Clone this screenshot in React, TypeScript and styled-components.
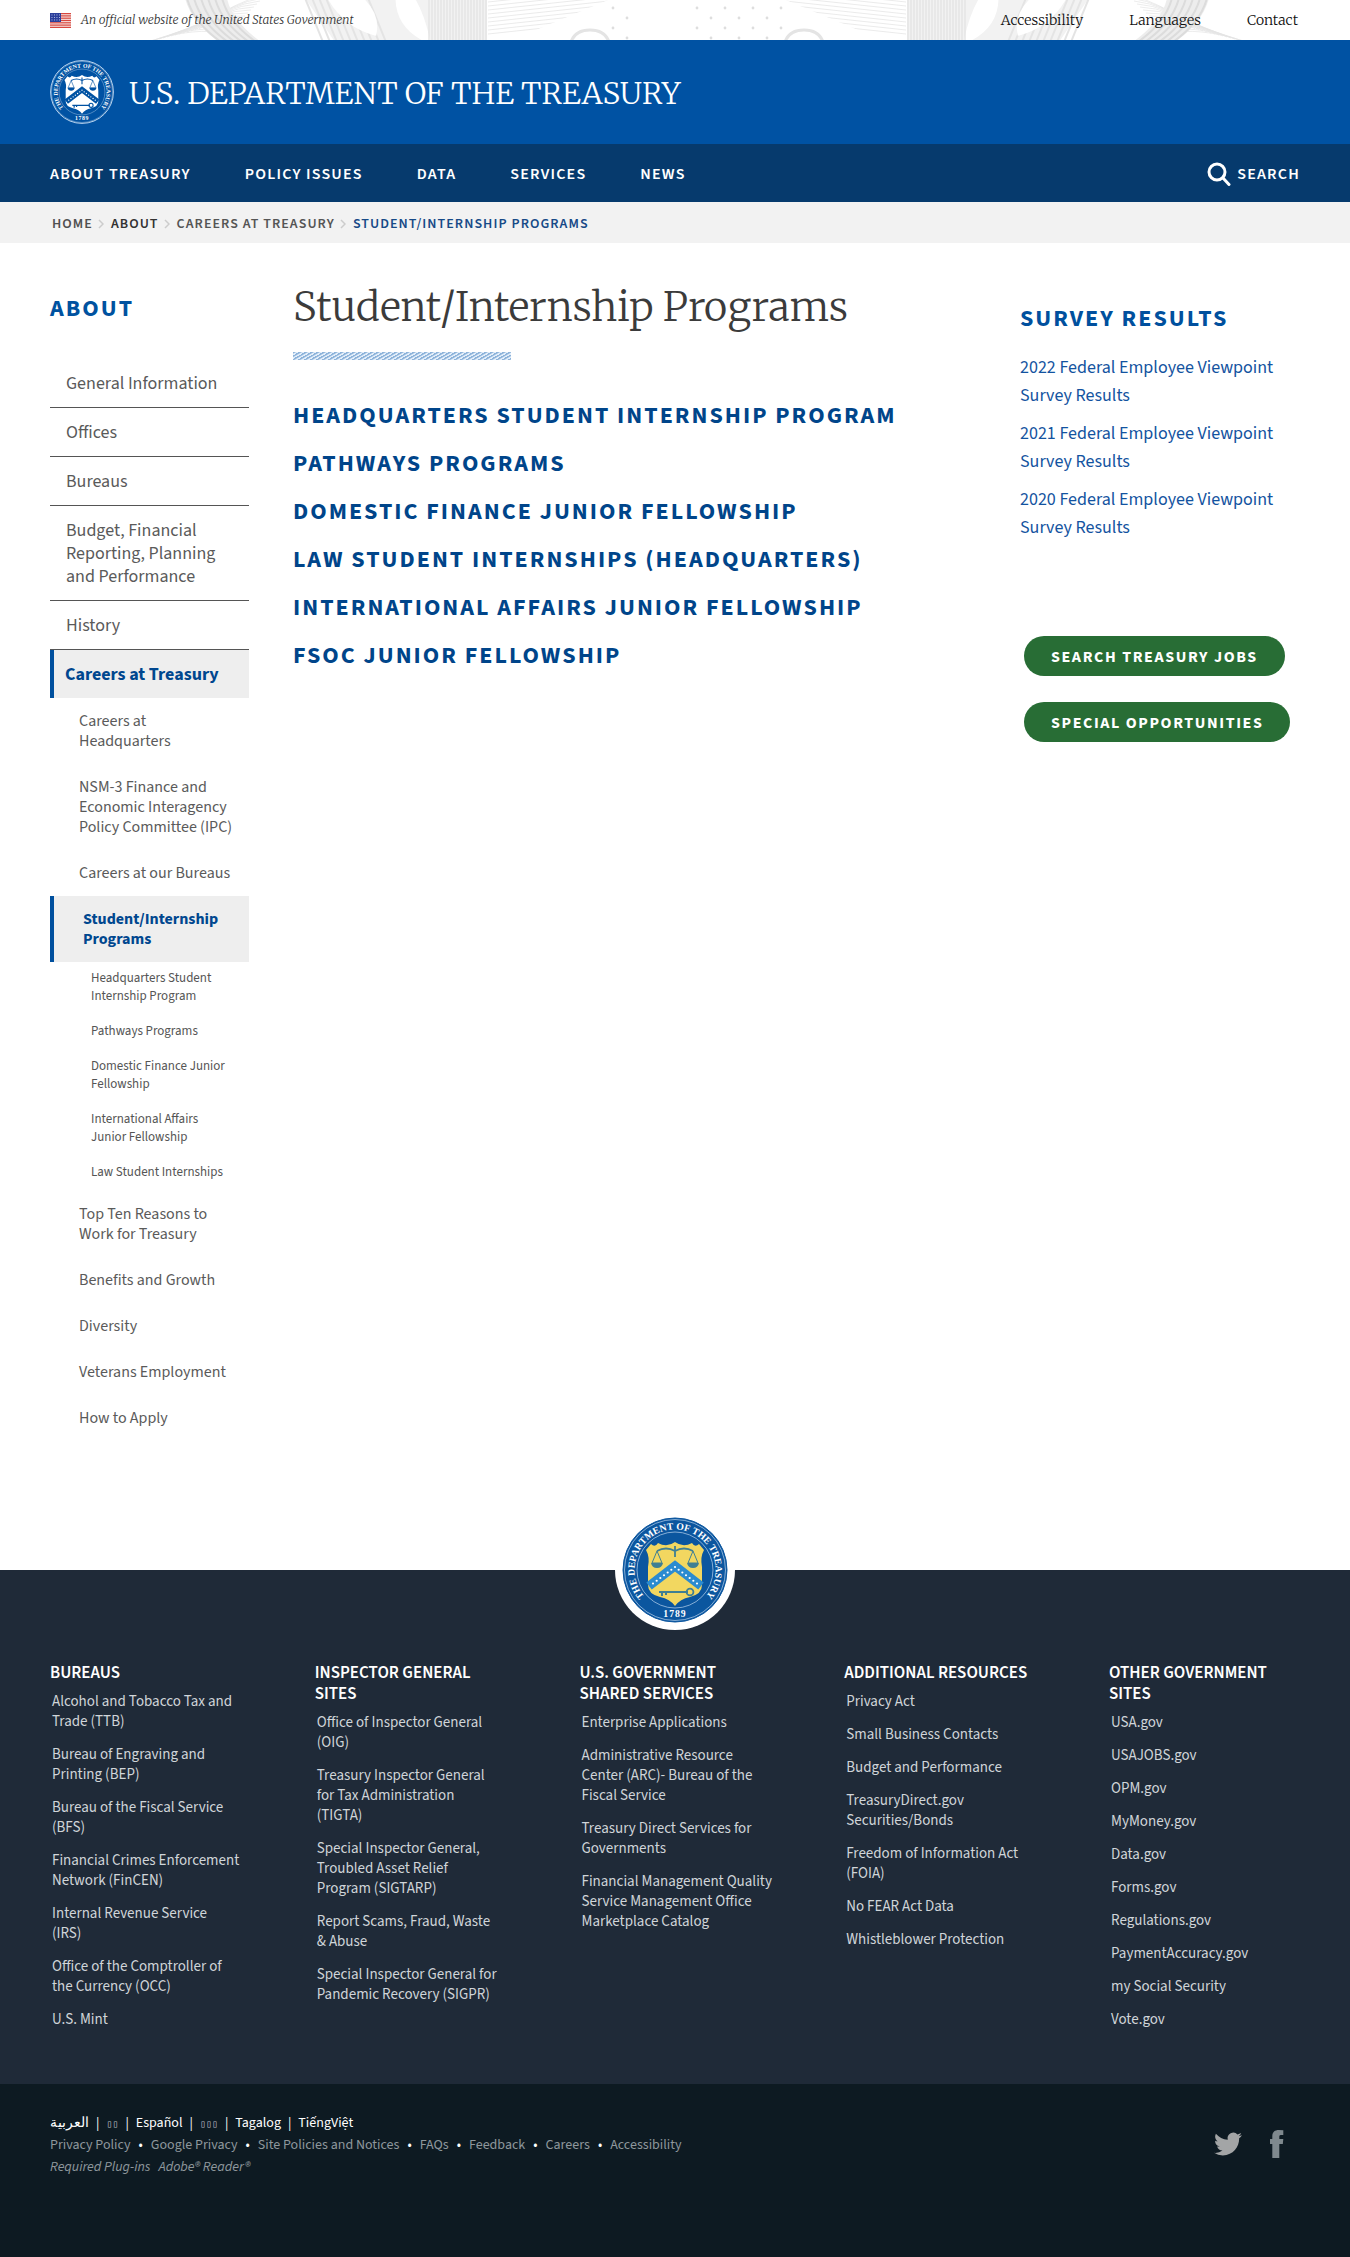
import React from "react";
import styled, { createGlobalStyle, css } from "styled-components";

const sans = `"Source Sans 3", "Noto Sans CJK SC", "Noto Sans", sans-serif`;
const serif = `Merriweather, "Liberation Serif", serif`;

const GlobalStyle = createGlobalStyle`
  *, *::before, *::after { box-sizing: border-box; }
  body { margin: 0; background: #fff; color: #444; font-family: ${sans}; font-size: 16px; }
  a { color: inherit; text-decoration: none; }
  a:hover { text-decoration: underline; }
  ul, ol { list-style: none; margin: 0; padding: 0; }
  h1, h2, h3, p { margin: 0; }
`;

const row = css`
  display: flex;
  align-items: center;
`;

const TopStrip = styled.div`
  ${row}
  position: relative;
  justify-content: space-between;
  height: 40px;
  padding: 0 52px 0 50px;
  overflow: hidden;
`;
const Engraving = styled.svg`
  position: absolute;
  top: 0;
  left: 50%;
  margin-left: -675px;
  width: 1350px;
  height: 40px;
`;
const Official = styled.p`
  ${row}
  position: relative;
  gap: 10px;
  font: italic 300 12px/20px ${serif};
  color: #333;
`;
const UtilityNav = styled.nav`
  ${row}
  position: relative;
  gap: 46px;
  font: 300 14px/20px ${serif};
  color: #111;
`;

const Masthead = styled.header`
  ${row}
  gap: 15px;
  height: 104px;
  padding: 0 50px;
  background: #0052a3;
`;
const SiteName = styled.a`
  padding-top: 2px;
  font: 300 30px/40px ${serif};
  color: #fff;
`;

const MainNav = styled.nav`
  ${row}
  justify-content: space-between;
  height: 58px;
  padding: 2px 50px 0;
  background: #063a6d;
  color: #fff;
  font: 600 16px/20px ${sans};
  letter-spacing: 0.075em;
`;
const NavList = styled.ul`
  ${row}
  gap: 54px;
`;
const SearchButton = styled.button`
  ${row}
  gap: 6px;
  padding: 0;
  border: 0;
  background: none;
  color: inherit;
  font: inherit;
  letter-spacing: inherit;
  cursor: pointer;
`;

const Crumbs = styled.ol`
  ${row}
  height: 41px;
  padding: 2px 52px 0;
  background: #f2f2f2;
  font: 600 14px/20px ${sans};
  letter-spacing: 0.075em;
`;
const Crumb = styled.li<{ $tone: string }>`
  ${row}
  color: ${(p) => p.$tone};
  svg { margin: 0 7px 0 5px; }
`;

const Body = styled.div`
  display: grid;
  grid-template-columns: 199px minmax(0, 1fr) 280px;
  column-gap: 44px;
  padding: 0 50px 129px;
`;

const SideTitle = styled.h2`
  padding-top: 52px;
  margin-bottom: 36px;
  font: 700 24px/28px ${sans};
  letter-spacing: 2px;
  color: #0052a0;
`;
const SideItem = styled.li<{ $active?: boolean }>`
  a {
    display: block;
    padding: 13px 12px 12px 16px;
    font-size: 18px;
    line-height: 23px;
    color: #5a5a5a;
    border-bottom: 1px solid #555;
  }
  ${(p) =>
    p.$active &&
    css`
      > a {
        padding-left: 11px;
        border-left: 4px solid #00509e;
        border-bottom: 0;
        background: #eee;
        color: #00478f;
        font-weight: 700;
      }
    `}
`;
const SubItem = styled.li<{ $active?: boolean }>`
  > a {
    display: block;
    padding: 13px 12px 13px 29px;
    font-size: 16px;
    line-height: 20px;
    border: 0;
    color: #5a5a5a;
  }
  ${(p) =>
    p.$active &&
    css`
      > a {
        border-left: 4px solid #00509e;
        background: #eee;
        color: #00478f;
        font-weight: 700;
      }
    `}
`;
const LeafItem = styled.li`
  > a {
    display: block;
    padding: 7px 20px 10px 41px;
    font-size: 13px;
    line-height: 18px;
    border: 0;
    color: #555;
  }
`;

const PageTitle = styled.h1`
  padding-top: 36px;
  font: 300 40px/56px ${serif};
  color: #3b3b3b;
`;
const Hatch = styled.div`
  width: 218px;
  height: 8px;
  margin: 17px 0 42px;
  background: repeating-linear-gradient(150deg, #8db3da 0 1px, #e3eefa 2px 3px);
`;
const ProgramList = styled.ul`
  display: grid;
  gap: 20px;
  font: 700 24px/28px ${sans};
  letter-spacing: 2px;
  color: #00458a;
`;

const AsideTitle = styled.h2`
  padding-top: 62px;
  margin-bottom: 21px;
  font: 700 24px/28px ${sans};
  letter-spacing: 2px;
  color: #00509e;
`;
const SurveyList = styled.ul`
  display: grid;
  gap: 10px;
  margin-bottom: 94px;
  font-size: 18px;
  line-height: 28px;
  color: #1353a0;
`;
const Actions = styled.div`
  display: grid;
  justify-items: start;
  gap: 26px;
  padding-left: 4px;
`;
const Pill = styled.button`
  height: 40px;
  padding: 1px 27px 0;
  border: 0;
  border-radius: 20px;
  background: #286d35;
  color: #fff;
  font: 700 16px/20px ${sans};
  letter-spacing: 0.1em;
  cursor: pointer;
`;

const FooterTop = styled.footer`
  position: relative;
  padding: 93px 50px 54px;
  background: #1f2a38;
`;
const SealBadge = styled.div`
  position: absolute;
  top: -60px;
  left: 50%;
  margin-left: -60px;
  display: grid;
  place-items: center;
  width: 120px;
  height: 120px;
  border-radius: 50%;
  background: #fff;
`;
const FooterGrid = styled.div`
  display: grid;
  grid-template-columns: repeat(5, 191px);
  justify-content: space-between;
`;
const FooterHeading = styled.h3`
  margin-bottom: 8px;
  font: 600 17px/21px ${sans};
  color: #fff;
`;
const FooterLinks = styled.ul`
  display: grid;
  gap: 13px;
  padding-left: 2px;
  font-size: 15px;
  line-height: 20px;
  white-space: pre;
  color: #d0d5d9;
`;

const FooterBottom = styled.div`
  display: flex;
  justify-content: space-between;
  padding: 28px 66px 79px 50px;
  background: #0d1a22;
  font-size: 14px;
  line-height: 22px;
  color: #8e979c;
`;
const InlineList = styled.ul<{ $mark: string; $gap: number }>`
  display: flex;
  height: 22px;
  li + li::before {
    content: "${(p) => p.$mark}";
    margin: 0 ${(p) => p.$gap}px;
    color: #fff;
  }
`;
const Languages = styled(InlineList)`
  color: #fff;
`;
const Boxes = styled.a`
  font-family: "DejaVu Sans Mono", monospace;
  font-size: 10px;
  color: #b9bfc3;
`;
const Plugins = styled.p`
  display: flex;
  gap: 8px;
  font-style: italic;
`;
const Social = styled.div`
  display: flex;
  align-items: flex-start;
  gap: 28px;
  padding-top: 18px;
`;

const shield =
  "M29 27Q33 31 36 26Q45 31 53 25Q61 31 70 26Q73 31 77 27L82 33Q78 40 80 50V68Q80 77 68 80Q58 82 53 89Q48 82 38 80Q26 77 26 68V50Q28 40 24 33Z";

function Seal({ size, mono, id }: { size: number; mono?: boolean; id: string }) {
  const blue = mono ? "#0052a3" : "#0b569f";
  const gold = mono ? "#fff" : "#f2d760";
  const ink = mono ? "#0052a3" : "#3f7f93";
  const band = mono ? "#0052a3" : "#2b8bd0";
  const stars = [0, 1, 2, 3, 4, 5, 6, 7, 8, 9, 10, 11, 12];
  return (
    <svg width={size} height={size} viewBox="0 0 106 106" role="img" aria-label="Treasury seal">
      <circle cx="53" cy="53" r="52" fill={blue} stroke={mono ? "#cfe3f7" : "#0b569f"} strokeWidth={mono ? 1.5 : 1} />
      <circle cx="53" cy="53" r="50.5" fill="none" stroke="#b9d3ec" strokeWidth="0.7" />
      <circle cx="53" cy="53" r="38" fill="none" stroke="#b9d3ec" strokeWidth="0.7" />
      <path id={id} d="M53 93.500A40.500 40.500 0 1 1 53.1 93.500" fill="none" />
      <text fontFamily="Liberation Serif, serif" fontSize="9.700" fontWeight="700" fill="#fff" textAnchor="middle">
        <textPath href={`#${id}`} startOffset="50%">THE DEPARTMENT OF THE TREASURY</textPath>
      </text>
      <text x="53" y="100" fontFamily="Liberation Serif, serif" fontSize="9.700" fontWeight="700" fill="#fff" textAnchor="middle" letterSpacing="1">1789</text>
      <path d={shield} fill={gold} />
      <path d="M27 69L53 49L79 69" fill="none" stroke={band} strokeWidth="9" />
      {stars.map((i) => {
        const t = (i - 6) / 6;
        return <circle key={i} cx={53 + t * 22} cy={50 + Math.abs(t) * 16.5} r="1.1" fill="#fff" />;
      })}
      <g fill="none" stroke={ink} strokeWidth="1.8">
        <path d="M35 34Q44 29 53 34Q62 29 71 34M53 29V40" />
        <path d="M35 34L30 46H40ZM71 34L66 46H76Z" strokeWidth="1" />
        <path d="M37 75H66M40 75V79M44 75V78" strokeWidth="2" />
        <circle cx="68" cy="75" r="3.4" />
      </g>
      <path d="M29 46H41Q40 51 35 51Q30 51 29 46ZM65 46H77Q76 51 71 51Q66 51 65 46Z" fill={ink} />
    </svg>
  );
}

function Flag() {
  return (
    <svg width="21" height="15" viewBox="0 0 21 15" aria-hidden="true">
      <rect width="21" height="15" fill="#f6e3e0" />
      {[0, 1, 2, 3, 4, 5, 6].map((i) => (
        <rect key={i} y={i * 2.3} width="21" height="1.2" fill="#d8473f" />
      ))}
      <rect width="11" height="9" fill="#2b3f9b" />
      {[1.5, 4, 6.5, 9].map((x) =>
        [1.5, 4, 6.5].map((y) => <rect key={`${x}-${y}`} x={x} y={y} width="0.9" height="0.9" fill="#cfd6f2" />)
      )}
    </svg>
  );
}

function range(n: number) {
  return Array.from({ length: n }, (_, i) => i);
}

function EngravingHalf() {
  return (
    <g fill="none" stroke="#e4e4e4" strokeWidth="1">
      {range(14).map((i) => (
        <path key={`a${i}`} d={`M${-550 + i * 4} ${42 - i}Q${-500 + i * 3} ${26 - i * 2} ${-470 + i * 3} ${34 - i * 3}`} opacity="0.7" />
      ))}
      <path d="M-512 -2Q-506 22 -478 42H-436Q-466 20 -470 -2Z" fill="#ededed" stroke="none" />
      {range(6).map((i) => (
        <path key={`b${i}`} d={`M${-510 + i * 7} -2Q${-504 + i * 7} 22 ${-476 + i * 7} 42`} stroke="#dcdcdc" strokeWidth="2" />
      ))}
      <path d="M-392 -2L-362 42H-210V-2Z" fill="#f2f2f2" stroke="none" />
      {range(10).map((i) => (
        <path key={`e${i}`} d={`M${-392 + i * 7} -2L${-374 + i * 7} 42`} strokeWidth="2" />
      ))}
      <path d="M-368 -2Q-352 26 -322 34Q-318 14 -336 -2M-300 -2Q-300 28 -268 42Q-274 14 -284 -2" fill="#fff" stroke="#fff" strokeWidth="3" />
      {range(20).map((i) => (
        <path key={`c${i}`} d={`M${-268 + i * 3} -2V42`} stroke="#e2e2e2" strokeWidth="1.3" />
      ))}
      {range(13).map((i) => (
        <path key={`d${i}`} d={`M-209 ${-14 + i * 4}L${-60} ${-30 + i * 4}`} opacity="0.75" />
      ))}
      <path d="M-190 42L-84 -2H60V42Z" fill="#fff" stroke="none" />
      <path d="M-126 42Q-122 30 -107 30Q-92 30 -88 42" stroke="#e4e4e4" strokeWidth="3" />
      {range(7).map((c) =>
        range(2).map((r) => (
          <circle key={`${c}-${r}`} cx={-84 + c * 14} cy={8 + r * 20 + (c % 2) * 10} r="1.4" fill="#dedede" stroke="none" />
        ))
      )}
    </g>
  );
}

const mainLinks = ["ABOUT TREASURY", "POLICY ISSUES", "DATA", "SERVICES", "NEWS"];
const crumbs = [
  ["HOME", "#505050"],
  ["ABOUT", "#333"],
  ["CAREERS AT TREASURY", "#555"],
  ["STUDENT/INTERNSHIP PROGRAMS", "#174a87"],
];
const sideLinks = ["General Information", "Offices", "Bureaus", "Budget, Financial Reporting, Planning and Performance", "History"];
const leafLinks = [
  "Headquarters Student Internship Program",
  "Pathways Programs",
  "Domestic Finance Junior Fellowship",
  "International Affairs Junior Fellowship",
  "Law Student Internships",
];
const programs = [
  "HEADQUARTERS STUDENT INTERNSHIP PROGRAM",
  "PATHWAYS PROGRAMS",
  "DOMESTIC FINANCE JUNIOR FELLOWSHIP",
  "LAW STUDENT INTERNSHIPS (HEADQUARTERS)",
  "INTERNATIONAL AFFAIRS JUNIOR FELLOWSHIP",
  "FSOC JUNIOR FELLOWSHIP",
];
const footerColumns: [string, string[]][] = [
  ["BUREAUS", [
    "Alcohol and Tobacco Tax and\nTrade (TTB)",
    "Bureau of Engraving and\nPrinting (BEP)",
    "Bureau of the Fiscal Service\n(BFS)",
    "Financial Crimes Enforcement\nNetwork (FinCEN)",
    "Internal Revenue Service\n(IRS)",
    "Office of the Comptroller of\nthe Currency (OCC)",
    "U.S. Mint",
  ]],
  ["INSPECTOR GENERAL SITES", [
    "Office of Inspector General\n(OIG)",
    "Treasury Inspector General\nfor Tax Administration\n(TIGTA)",
    "Special Inspector General,\nTroubled Asset Relief\nProgram (SIGTARP)",
    "Report Scams, Fraud, Waste\n& Abuse",
    "Special Inspector General for\nPandemic Recovery (SIGPR)",
  ]],
  ["U.S. GOVERNMENT SHARED SERVICES", [
    "Enterprise Applications",
    "Administrative Resource\nCenter (ARC)- Bureau of the\nFiscal Service",
    "Treasury Direct Services for\nGovernments",
    "Financial Management Quality\nService Management Office\nMarketplace Catalog",
  ]],
  ["ADDITIONAL RESOURCES", [
    "Privacy Act",
    "Small Business Contacts",
    "Budget and Performance",
    "TreasuryDirect.gov\nSecurities/Bonds",
    "Freedom of Information Act\n(FOIA)",
    "No FEAR Act Data",
    "Whistleblower Protection",
  ]],
  ["OTHER GOVERNMENT SITES", [
    "USA.gov", "USAJOBS.gov", "OPM.gov", "MyMoney.gov", "Data.gov", "Forms.gov",
    "Regulations.gov", "PaymentAccuracy.gov", "my Social Security", "Vote.gov",
  ]],
];
const policyLinks = ["Privacy Policy", "Google Privacy", "Site Policies and Notices", "FAQs", "Feedback", "Careers", "Accessibility"];

function Sub({ label, active, children }: { label: string; active?: boolean; children?: React.ReactNode }) {
  return (
    <SubItem $active={active}>
      <a href="#">{label}</a>
      {children}
    </SubItem>
  );
}

export default function App() {
  return (
    <>
      <GlobalStyle />
      <TopStrip>
        <Engraving viewBox="0 0 1350 40" aria-hidden="true">
          <g transform="translate(697 0)"><EngravingHalf /></g>
          <g transform="translate(697 0) scale(-1 1)"><EngravingHalf /></g>
        </Engraving>
        <Official><Flag />An official website of the United States Government</Official>
        <UtilityNav aria-label="Utility">
          <a href="#">Accessibility</a>
          <a href="#">Languages</a>
          <a href="#">Contact</a>
        </UtilityNav>
      </TopStrip>

      <Masthead>
        <Seal size={64} mono id="ring-small" />
        <SiteName href="#">U.S. DEPARTMENT OF THE TREASURY</SiteName>
      </Masthead>

      <MainNav aria-label="Main">
        <NavList>
          {mainLinks.map((l) => <li key={l}><a href="#">{l}</a></li>)}
        </NavList>
        <SearchButton type="button">
          <svg width="24" height="24" viewBox="0 0 24 24" fill="none" stroke="#fff" strokeWidth="3" strokeLinecap="round" aria-hidden="true">
            <circle cx="10" cy="10" r="8" />
            <path d="M16 16L22 22.500" />
          </svg>
          SEARCH
        </SearchButton>
      </MainNav>

      <Crumbs aria-label="Breadcrumb">
        {crumbs.map(([label, tone], i) => (
          <Crumb key={label} $tone={tone}>
            <a href="#">{label}</a>
            {i < crumbs.length - 1 && (
              <svg width="6" height="10" viewBox="0 0 6 10" fill="none" stroke="#ccc" strokeWidth="1.5" aria-hidden="true">
                <path d="M1 1L5 5L1 9" />
              </svg>
            )}
          </Crumb>
        ))}
      </Crumbs>

      <Body>
        <nav aria-label="Section">
          <SideTitle>ABOUT</SideTitle>
          <ul>
            {sideLinks.map((l) => <SideItem key={l}><a href="#">{l}</a></SideItem>)}
            <SideItem $active><a href="#">Careers at Treasury</a></SideItem>
            <Sub label="Careers at Headquarters" />
            <Sub label="NSM-3 Finance and Economic Interagency Policy Committee (IPC)" />
            <Sub label="Careers at our Bureaus" />
            <Sub label="Student/Internship Programs" active>
              <ul>
                {leafLinks.map((l) => <LeafItem key={l}><a href="#">{l}</a></LeafItem>)}
              </ul>
            </Sub>
            <Sub label="Top Ten Reasons to Work for Treasury" />
            <Sub label="Benefits and Growth" />
            <Sub label="Diversity" />
            <Sub label="Veterans Employment" />
            <Sub label="How to Apply" />
          </ul>
        </nav>

        <main>
          <PageTitle>Student/Internship Programs</PageTitle>
          <Hatch />
          <ProgramList>
            {programs.map((p) => <li key={p}><a href="#">{p}</a></li>)}
          </ProgramList>
        </main>

        <aside>
          <AsideTitle>SURVEY RESULTS</AsideTitle>
          <SurveyList>
            {[2022, 2021, 2020].map((y) => (
              <li key={y}><a href="#">{`${y} Federal Employee Viewpoint Survey Results`}</a></li>
            ))}
          </SurveyList>
          <Actions>
            <Pill type="button">SEARCH TREASURY JOBS</Pill>
            <Pill type="button">SPECIAL OPPORTUNITIES</Pill>
          </Actions>
        </aside>
      </Body>

      <FooterTop>
        <SealBadge><Seal size={106} id="ring-large" /></SealBadge>
        <FooterGrid>
          {footerColumns.map(([title, links]) => (
            <section key={title}>
              <FooterHeading>{title}</FooterHeading>
              <FooterLinks>
                {links.map((l) => <li key={l}><a href="#">{l}</a></li>)}
              </FooterLinks>
            </section>
          ))}
        </FooterGrid>
      </FooterTop>

      <FooterBottom>
        <div>
          <Languages $mark="|" $gap={7}>
            <li><a href="#" lang="ar">العربية</a></li>
            <li><Boxes href="#">▯▯</Boxes></li>
            <li><a href="#" lang="es">Español</a></li>
            <li><Boxes href="#">▯▯▯</Boxes></li>
            <li><a href="#" lang="tl">Tagalog</a></li>
            <li><a href="#" lang="vi">TiếngViệt</a></li>
          </Languages>
          <InlineList $mark="•" $gap={8}>
            {policyLinks.map((l) => <li key={l}><a href="#">{l}</a></li>)}
          </InlineList>
          <Plugins><span>Required Plug-ins</span><a href="#">Adobe® Reader®</a></Plugins>
        </div>
        <Social>
          <a href="#" aria-label="Twitter">
            <svg width="28" height="28" viewBox="0 0 24 24" fill="#a3a5a6">
              <path d="M23.95 4.57a10 10 0 0 1-2.82.77 4.96 4.96 0 0 0 2.16-2.72c-.95.55-2 .95-3.13 1.18a4.92 4.92 0 0 0-8.38 4.48C7.69 8.1 4.07 6.13 1.64 3.16a4.82 4.82 0 0 0-.67 2.48c0 1.71.87 3.21 2.19 4.1a4.9 4.9 0 0 1-2.23-.62v.06a4.92 4.92 0 0 0 3.95 4.83 5 5 0 0 1-2.21.08 4.94 4.94 0 0 0 4.6 3.42A9.87 9.87 0 0 1 0 19.54a13.99 13.99 0 0 0 7.55 2.21c9.05 0 14-7.5 14-13.98 0-.21 0-.42-.02-.63a9.94 9.94 0 0 0 2.42-2.57z" />
            </svg>
          </a>
          <a href="#" aria-label="Facebook">
            <svg width="14" height="28" viewBox="0 0 14 28" fill="#7f898e">
              <path d="M13.3 0.3V5H10.800C9.600 5 9.300 5.700 9.300 7V9H13.300L12.800 14H9.300V28H2.300V14H0V9H2.300V6.200C2.300 2 4.800 0 8.800 0Q11.800 0 13.300 0.300Z" />
            </svg>
          </a>
        </Social>
      </FooterBottom>
    </>
  );
}
